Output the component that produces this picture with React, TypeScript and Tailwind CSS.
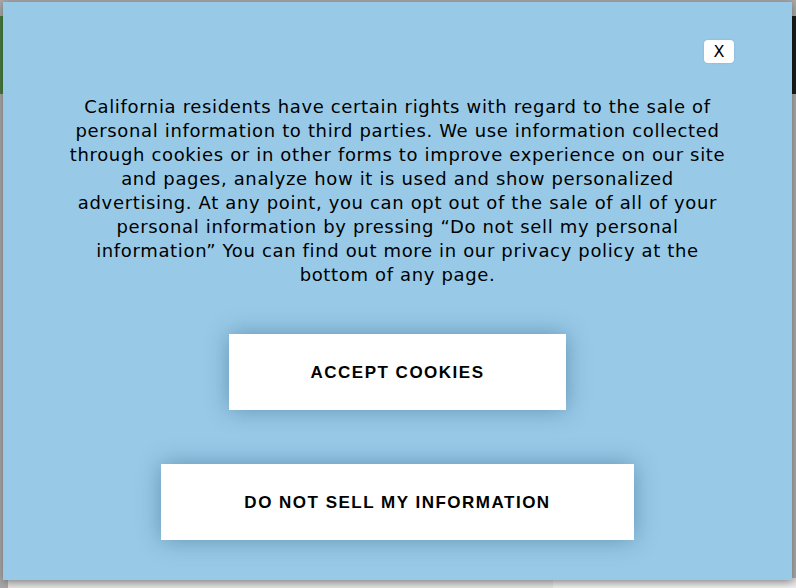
export default function App() {
  return (
    <div className="relative w-[796px] h-[588px] overflow-hidden bg-[#a7a7a7] pt-[2px] pl-[3px] font-['Liberation_Sans',sans-serif]">
      {/* page behind the overlay */}
      <div className="absolute left-0 top-[16px] w-[4px] h-[78px] bg-[#477a3f]" />
      <div className="absolute right-0 top-[16px] w-[5px] h-[78px] bg-[#1b1b1b]" />
      <div className="absolute inset-x-0 bottom-0 h-[10px] flex">
        <div className="ml-[8px] w-[545px] bg-gradient-to-b from-[#c9c9c9] to-[#e4e4e4]" />
        <div className="flex-1 bg-gradient-to-b from-[#d2d2d2] to-[#efefef]" />
      </div>

      {/* modal */}
      <div className="relative w-[789px] h-[578px] bg-[#98cae8] shadow-[0_2px_8px_rgba(0,0,0,0.35)] flex flex-col items-center pt-[93px]">
        <button className="absolute top-[38px] right-[58px] w-[30px] h-[23px] rounded-[4px] bg-white shadow-[0_0_2px_rgba(0,0,0,0.15)] text-[16px] leading-none text-black flex items-center justify-center font-['DejaVu_Sans',sans-serif]">
          X
        </button>

        <p className="w-[740px] text-center text-[18px] leading-[24px] text-black font-['DejaVu_Sans',sans-serif] tracking-[0.65px]">
          California residents have certain rights with regard to the sale of
          <br />
          personal information to third parties. We use information collected
          <br />
          through cookies or in other forms to improve experience on our site
          <br />
          and pages, analyze how it is used and show personalized
          <br />
          advertising. At any point, you can opt out of the sale of all of your
          <br />
          personal information by pressing “Do not sell my personal
          <br />
          information” You can find out more in our privacy policy at the
          <br />
          bottom of any page.
        </p>

        <div className="mt-[47px] flex flex-col items-center gap-[54px]">
          <button className="h-[76px] w-[337px] bg-white shadow-[0_0_22px_rgba(40,80,110,0.45)] pt-[2px] text-[17px] font-bold tracking-[1.5px] text-black">
            ACCEPT COOKIES
          </button>
          <button className="h-[76px] w-[473px] bg-white shadow-[0_0_22px_rgba(40,80,110,0.45)] pt-[2px] text-[17px] font-bold tracking-[1.5px] text-black">
            DO NOT SELL MY INFORMATION
          </button>
        </div>
      </div>
    </div>
  )
}
